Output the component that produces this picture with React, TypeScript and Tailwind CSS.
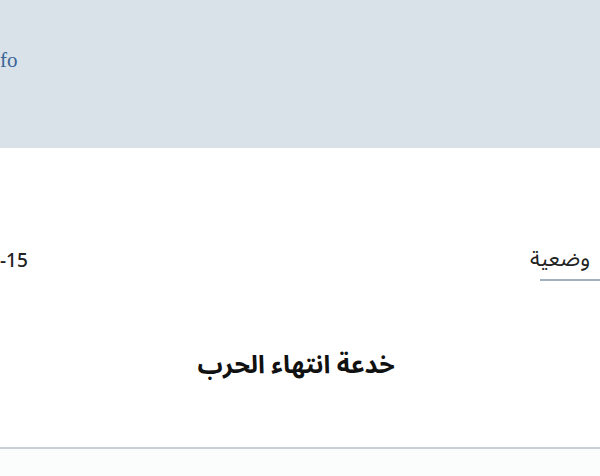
export default function App() {
  return (
    <div className="w-[600px] h-[476px] overflow-hidden bg-white" style={{ fontFamily: '"Noto Sans Arabic", "Noto Sans", "DejaVu Sans", sans-serif' }}>
      <header className="h-[148px] bg-[#d9e1e9] flex items-start pt-[46px]">
        <span className="ml-0 text-[21px] leading-[28px] text-[#3a6597] font-['Liberation_Serif',serif]">fo</span>
      </header>
      <div className="h-[299px] flex flex-col">
        <div className="mt-[97px] flex items-start justify-between">
          <span className="mt-[1px] ml-0 text-[19px] leading-[28px] text-[#222] font-medium font-['Noto_Sans',sans-serif]">-15</span>
          <div dir="rtl" className="mr-[-20px] w-[80px] border-b-2 border-[#a3b0bb] pb-[6px]">
            <span className="block text-right pr-[30px] text-[22px] leading-[28px] text-[#222]">وضعية</span>
          </div>
        </div>
        <h1 dir="rtl" className="mt-[67px] pr-[8px] text-center text-[25px] leading-[34px] font-bold text-[#111]">خدعة انتهاء الحرب</h1>
      </div>
      <div className="h-[2px] bg-[#c9d0d6]" />
      <div className="h-[27px] bg-[#fbfcfc]" />
    </div>
  )
}
